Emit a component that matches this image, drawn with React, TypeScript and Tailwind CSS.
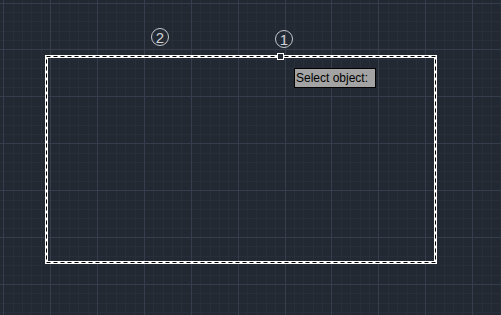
const W = 501;
const H = 315;
const MAJOR = 46.9;
const MINOR = MAJOR / 5;
const OX = 3.2;
const OY = 2.6;

function gridLines() {
  const out: { x?: number; y?: number; major: boolean }[] = [];
  for (let i = -5; i * MINOR + OX < W; i++) {
    const x = Math.round(OX + i * MINOR);
    if (x >= 0) out.push({ x, major: i % 5 === 0 });
  }
  for (let i = -5; i * MINOR + OY < H; i++) {
    const y = Math.round(OY + i * MINOR);
    if (y >= 0) out.push({ y, major: i % 5 === 0 });
  }
  return out;
}

function Grid() {
  const lines = gridLines();
  return (
    <svg className="absolute inset-0" width={W} height={H} viewBox={`0 0 ${W} ${H}`}>
      {lines
        .filter((l) => !l.major)
        .map((l, i) =>
          l.x !== undefined ? (
            <rect key={'m' + i} x={l.x} y={0} width={1} height={H} fill="#282f3a" />
          ) : (
            <rect key={'m' + i} x={0} y={l.y} width={W} height={1} fill="#282f3a" />
          )
        )}
      {lines
        .filter((l) => l.major)
        .map((l, i) =>
          l.x !== undefined ? (
            <rect key={'M' + i} x={l.x} y={0} width={1} height={H} fill="#363d4c" />
          ) : (
            <rect key={'M' + i} x={0} y={l.y} width={W} height={1} fill="#363d4c" />
          )
        )}
    </svg>
  );
}

function Selection() {
  // window selection box drawn from point 1 to point 2
  const x0 = 45, y0 = 55, x1 = 437, y1 = 264;
  return (
    <svg className="absolute inset-0" width={W} height={H} viewBox={`0 0 ${W} ${H}`}>
      <rect x={x0 + 1.5} y={y0 + 1.5} width={x1 - x0 - 3} height={y1 - y0 - 3} fill="none" stroke="#ffffff" strokeWidth={3} />
      <rect
        x={x0 + 1.5}
        y={y0 + 1.5}
        width={x1 - x0 - 3}
        height={y1 - y0 - 3}
        fill="none"
        stroke="#000000"
        strokeWidth={1}
        strokeDasharray="4 3"
      />
      <rect x={277.5} y={53.5} width={6} height={6} fill="#222933" stroke="#ffffff" strokeWidth={1} />
    </svg>
  );
}

function Marker({ n, className }: { n: string; className: string }) {
  return (
    <span
      className={`absolute flex h-[18px] w-[18px] items-center justify-center rounded-full border border-[#c4c7cc] text-[15px] leading-none text-[#d2d4d8] ${className}`}
    >
      {n}
    </span>
  );
}

export default function App() {
  return (
    <div className="relative w-[501px] h-[315px] overflow-hidden bg-[#222933] font-['Liberation_Sans',Arial,sans-serif]">
      <Grid />
      <Selection />
      <Marker n="2" className="left-[151px] top-[28px]" />
      <Marker n="1" className="left-[275px] top-[30px]" />
      <div className="absolute left-[294px] top-[68px] w-[82px] h-[20px] border border-black bg-[#a3a3a3] pl-[1px] text-[12px] leading-[18px] text-black">
        Select object:
      </div>
    </div>
  );
}
